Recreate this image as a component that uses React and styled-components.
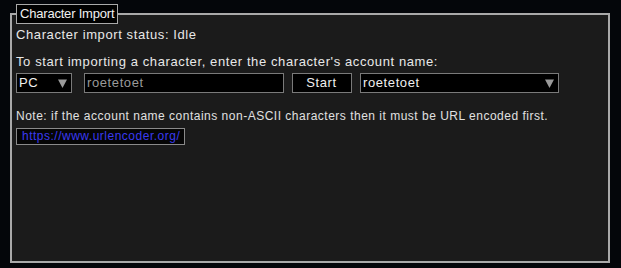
import React from "react";
import styled, { createGlobalStyle } from "styled-components";

const Global = createGlobalStyle`
  html, body { margin: 0; padding: 0; background: #04060a; }
  body { font-family: "Liberation Sans", Arial, sans-serif; color: #e6e6e6; }
  * { box-sizing: border-box; }
`;

const Page = styled.div`
  width: 621px;
  height: 268px;
  padding: 4px 11px 5px 10px;
`;

const Fieldset = styled.fieldset`
  margin: 0;
  width: 600px;
  height: 259px;
  border: 2px solid #a9a9a9;
  background: #1b1b1b;
  padding: 0 4px;
  min-width: 0;
`;

const Legend = styled.legend`
  margin: 0;
  padding: 0 3px;
  border: 1px solid #a9a9a9;
  background: #000;
  color: #f0f0f0;
  font-size: 13px;
  letter-spacing: -0.2px;
  line-height: 18px;
`;

const Line = styled.div`
  font-size: 13px;
  line-height: 16px;
  letter-spacing: 0.6px;
  color: #e8e8e8;
  margin-top: ${(p) => p.$mt || 0}px;
`;

const Row = styled.div`
  display: flex;
  align-items: center;
  gap: 8px;
  margin-top: 3px;
  height: 20px;
`;

const Box = styled.div`
  height: 20px;
  width: ${(p) => p.$w}px;
  margin-left: ${(p) => p.$ml || 0}px;
  border: 1px solid #7a7a7a;
  background: #000;
  font-size: 13px;
  letter-spacing: 0.6px;
  line-height: 18px;
  color: ${(p) => p.$muted ? "#9a9a9a" : "#f0f0f0"};
  display: flex;
  align-items: center;
  justify-content: ${(p) => p.$center ? "center" : "space-between"};
  padding: 0 3px 0 2px;
  flex-shrink: 0;
`;

const Arrow = () => (
  <svg width="9" height="9" viewBox="0 0 9 9" style={{ marginRight: 1 }}>
    <polygon points="0,0.5 9,0.5 4.5,9" fill="#9a9a9a" />
  </svg>
);

const Note = styled.div`
  font-size: 12px;
  line-height: 14px;
  letter-spacing: 0.5px;
  color: #e0e0e0;
  margin-top: 16px;
`;

const LinkBox = styled.a`
  display: inline-block;
  margin-top: 5px;
  height: 17px;
  border: 1px solid #8a8a8a;
  background: #050505;
  color: #3a3af0;
  font-size: 12px;
  letter-spacing: 0.5px;
  line-height: 15px;
  padding: 0 4px 0 5px;
  text-decoration: none;
`;

export default function App() {
  return (
    <Page>
      <Global />
      <Fieldset>
        <Legend>Character Import</Legend>
        <Line $mt={3}>Character import status: Idle</Line>
        <Line $mt={11}>To start importing a character, enter the character's account name:</Line>
        <Row>
          <Box $w={56}>PC<Arrow /></Box>
          <Box $w={200} $ml={4} $muted>roetetoet</Box>
          <Box $w={60} $center>Start</Box>
          <Box $w={199}>roetetoet<Arrow /></Box>
        </Row>
        <Note>Note: if the account name contains non-ASCII characters then it must be URL encoded first.</Note>
        <LinkBox href="#">https://www.urlencoder.org/</LinkBox>
      </Fieldset>
    </Page>
  );
}
